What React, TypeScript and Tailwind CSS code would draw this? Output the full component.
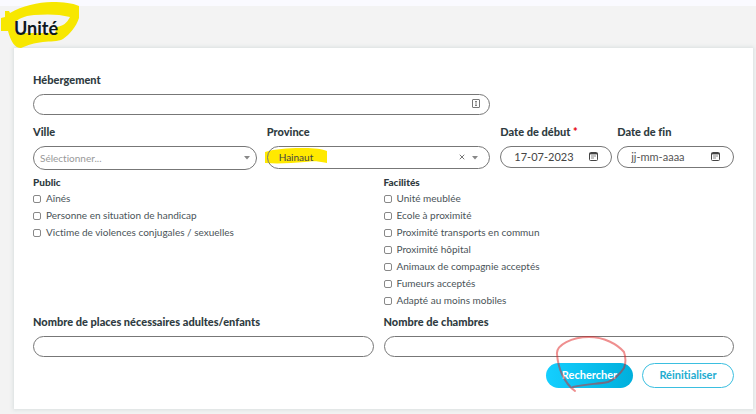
import { useState, type ReactNode } from "react";
import { X } from "lucide-react";

const publics = ["Aînés", "Personne en situation de handicap", "Victime de violences conjugales / sexuelles"];

const facilities = [
	"Unité meublée",
	"Ecole à proximité",
	"Proximité transports en commun",
	"Proximité hôpital",
	"Animaux de compagnie acceptés",
	"Fumeurs acceptés",
	"Adapté au moins mobiles",
];

const control = "block w-full rounded-full border border-[#777] bg-transparent outline-none";

function Field({ id, label, required, children }: { id: string; label: string; required?: boolean; children: ReactNode }) {
	return (
		<div>
			<label htmlFor={id} className="mb-[6px] block text-[11px] leading-4 font-black whitespace-nowrap text-[#2f3b41]">
				{label}
				{required && <span className="text-red-600"> *</span>}
			</label>
			<div className="relative">{children}</div>
		</div>
	);
}

function Caret() {
	return (
		<svg viewBox="0 0 6 4" className="pointer-events-none h-1 w-1.5 fill-[#888]" aria-hidden="true">
			<path d="M0 0h6L3 3.5z" />
		</svg>
	);
}

function CalendarIcon() {
	return (
		<svg viewBox="0 0 9 9" className="h-[9px] w-[9px]" fill="none" stroke="#444" aria-hidden="true">
			<rect x="0.5" y="0.5" width="8" height="8" rx="1" />
			<path d="M0.5 1.7h8" strokeWidth="1.4" />
			<path d="M2 4h5M2 6h3" strokeWidth="0.9" stroke="#777" />
		</svg>
	);
}

function DateField({ id, value, placeholder }: { id: string; value?: string; placeholder?: string }) {
	return (
		<>
			<input
				id={id}
				type="text"
				defaultValue={value}
				placeholder={placeholder}
				className={`${control} h-[22px] pr-7 pb-px pl-[13px] text-[11px] text-[#444] placeholder:text-[#555]`}
			/>
			<button type="button" aria-label="Ouvrir le calendrier" className="absolute top-[6px] right-[14px]">
				<CalendarIcon />
			</button>
		</>
	);
}

function CheckList({ title, items }: { title: string; items: string[] }) {
	return (
		<fieldset>
			<legend className="mb-px text-[10px] leading-[14px] font-black text-[#2f3b41]">{title}</legend>
			{items.map((item) => (
				<label key={item} className="flex h-[17px] items-center gap-[5px] text-[10px] text-[#4a5358]">
					<input type="checkbox" className="h-2 w-2 appearance-none rounded-[2px] border border-[#888] bg-white checked:bg-[#00b5e2]" />
					{item}
				</label>
			))}
		</fieldset>
	);
}

export default function App() {
	const [province, setProvince] = useState("Hainaut");

	return (
		<div className="min-h-screen border-t-[6px] border-[#fafaff] bg-[#f3f3f3] pr-[3px] pb-[5px] pl-[14px] font-['Lato',sans-serif] [font-variant-ligatures:none]">
			<header className="relative flex h-[42px] items-center pt-[2px]">
				<svg viewBox="0 0 80 48" className="absolute top-[-6px] left-[-14px] h-12 w-20" aria-hidden="true">
					<path
						fill="#f7e700"
						fillRule="evenodd"
						d="M5 11h4l1 2C22 6 38 2 52 2c12 0 20 1 27 4v12c-3 9-9 16-16 21-5 3-13 2-20 3-9 1-15 3-22 6-6 0-10-6-13-17H1V18l4-1zM15 23c2-4 9-7 19-8 13-1 25-1 36 2-3 6-7 9-13 10l-2 6H16z"
					/>
				</svg>
				<h1 className="relative text-lg font-bold text-[#0c1720]">Unité</h1>
			</header>

			<form
				className="bg-white px-[19px] pt-6 pb-[21px] shadow-[0_0_4px_1px_#d9dfdf]"
				onSubmit={(e) => e.preventDefault()}
			>
				<div className="grid grid-cols-6 gap-y-[9px]">
					<div className="col-span-4 pr-[10px]">
						<Field id="hebergement" label="Hébergement">
							<input id="hebergement" type="text" className={`${control} h-[21px] pr-7 pl-3 text-[11px]`} />
							<svg viewBox="0 0 8 9" className="absolute top-[5px] right-[10px] h-[9px] w-2" fill="none" stroke="#777" aria-hidden="true">
								<rect x="0.5" y="0.5" width="7" height="8" rx="0.5" />
								<path d="M4 2v5M3 2.5h2M3 6.5h2" strokeWidth="0.9" />
							</svg>
						</Field>
					</div>

					<div className="col-span-2 col-start-1 pr-[10px]">
						<Field id="ville" label="Ville">
							<select id="ville" className={`${control} h-6 appearance-none px-[6px] text-[10px] text-[#999]`}>
								<option>Sélectionner...</option>
								<option>Charleroi</option>
								<option>Mons</option>
							</select>
							<span className="pointer-events-none absolute top-[10px] right-[7px]">
								<Caret />
							</span>
						</Field>
					</div>
					<div className="col-span-2 pr-[10px]">
						<Field id="province" label="Province">
							<svg viewBox="0 0 64 18" className="absolute top-0 left-[-2px] h-[18px] w-16" aria-hidden="true">
								<path fill="#ffe900" d="M0 6C10 3 22 2 36 2c10 0 18 0 26 3v12c-10-2-14-2-22-1-13 1-26 2-40 1z" />
							</svg>
							<select
								id="province"
								value={province}
								onChange={(e) => setProvince(e.target.value)}
								className={`${control} relative h-[23px] appearance-none px-[11px] pb-px text-[10px] text-[#444]`}
							>
								<option value="">Sélectionner...</option>
								<option>Hainaut</option>
								<option>Namur</option>
							</select>
							<button type="button" aria-label="Effacer" onClick={() => setProvince("")} className="absolute top-[7px] right-6">
								<X size={8} color="#777" strokeWidth={3} />
							</button>
							<span className="pointer-events-none absolute top-[10px] right-3">
								<Caret />
							</span>
						</Field>
					</div>
					<div className="pr-[5px]">
						<Field id="debut" label="Date de début" required>
							<DateField id="debut" value="17-07-2023" />
						</Field>
					</div>
					<Field id="fin" label="Date de fin">
						<DateField id="fin" placeholder="jj-mm-aaaa" />
					</Field>
				</div>

				<div className="mt-[5px] grid grid-cols-2">
					<CheckList title="Public" items={publics} />
					<CheckList title="Facilités" items={facilities} />
				</div>

				<div className="mt-[5px] grid grid-cols-2">
					<div className="pr-[10px]">
						<Field id="places" label="Nombre de places nécessaires adultes/enfants">
							<input id="places" type="text" className={`${control} h-[21px] px-3 text-[11px]`} />
						</Field>
					</div>
					<Field id="chambres" label="Nombre de chambres">
						<input id="chambres" type="text" className={`${control} h-[21px] px-3 text-[11px]`} />
					</Field>
				</div>

				<div className="mt-[6px] flex justify-end gap-[9px] text-[11px] font-bold">
					<div className="relative">
						<button type="submit" className="h-[25px] w-[87px] rounded-full bg-linear-to-r from-[#14cfff] to-[#00afdc] text-white">
							Rechercher
						</button>
						<svg
							viewBox="0 0 72 58"
							className="pointer-events-none absolute top-[-27px] left-[9px] h-[58px] w-[72px]"
							fill="none"
							stroke="#e02020"
							strokeOpacity="0.5"
							strokeWidth="2"
							strokeLinecap="round"
							aria-hidden="true"
						>
							<path d="M20 55C9 47 3 32 2 18 1 9 17 1 34 1c15 0 28 7 35 15 2 6 2 11 0 16-4 6-8 11-16 14-10 2-22 2-35 5" />
						</svg>
					</div>
					<button type="reset" className="h-[25px] w-[92px] rounded-full border border-[#3bbfe0] bg-white text-[#22acd0]">
						Réinitialiser
					</button>
				</div>
			</form>
		</div>
	);
}
